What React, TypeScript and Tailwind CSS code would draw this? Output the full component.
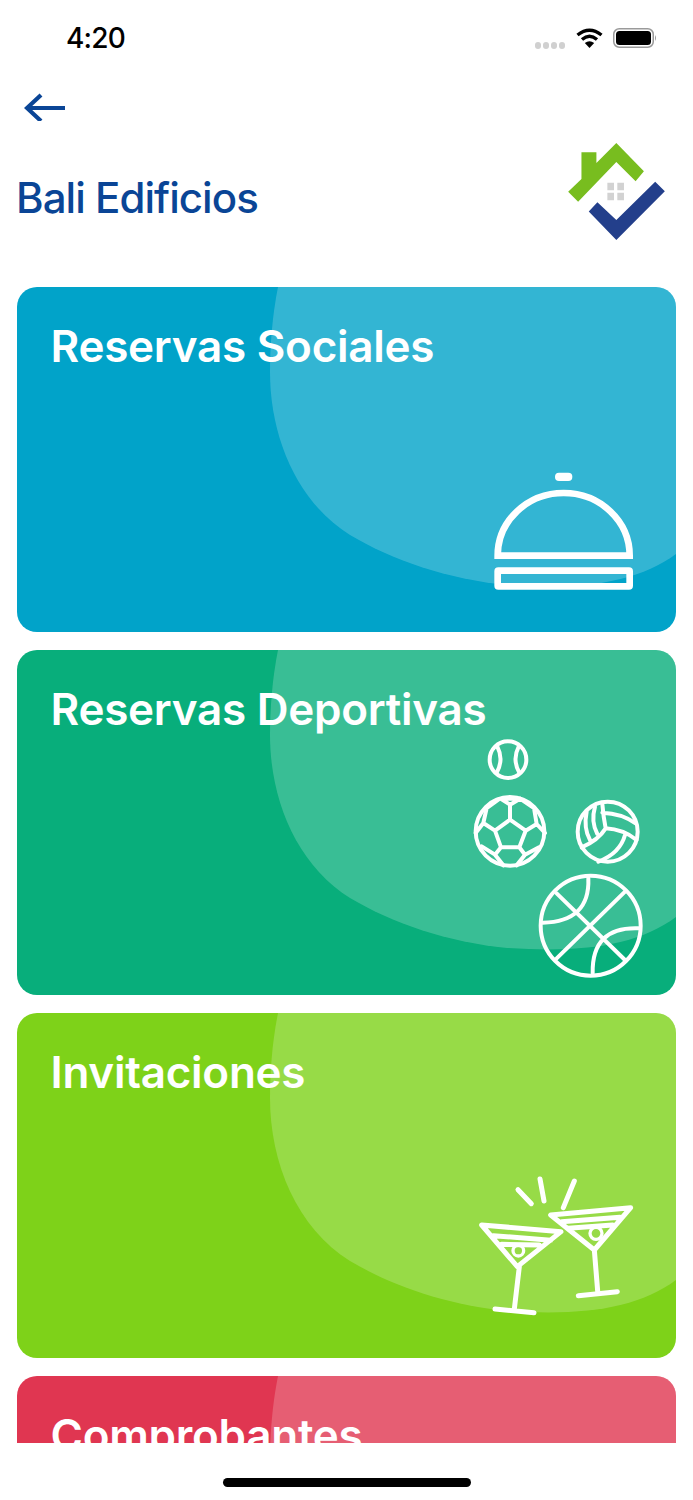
const cards = [
  { title: "Reservas Sociales", bg: "bg-[#01a3c9]", icon: <DomeIcon /> },
  { title: "Reservas Deportivas", bg: "bg-[#08ae7b]", icon: <SportsIcon /> },
  { title: "Invitaciones", bg: "bg-[#7ed219]", icon: <CocktailIcon /> },
  { title: "Comprobantes", bg: "bg-[#e03651]", icon: null },
];

function DomeIcon() {
  return (
    <svg className="absolute left-[433px] top-[163px] w-[230px] h-[190px]" viewBox="0 0 690 570" fill="none" stroke="white" strokeWidth="20">
      <path d="M143 317 H539 A198 188 0 0 0 143 317 Z" strokeLinejoin="miter" />
      <rect x="143" y="362" width="396" height="47" rx="2" />
      <rect x="315" y="68" width="52" height="25" rx="12" fill="white" stroke="none" />
    </svg>
  );
}

function SportsIcon() {
  return (
    <svg className="absolute left-[443px] top-[80px] w-[200px] h-[255px]" viewBox="0 0 600 765" fill="none" stroke="white" strokeWidth="12" strokeLinecap="round" strokeLinejoin="round">
      <circle cx="144" cy="89" r="55" />
      <path d="M112 50 Q132 89 110 128 M176 50 Q156 89 178 128" />
      <circle cx="150" cy="304" r="103" />
      <path d="M150 269 L197 302 L178 352 L123 352 L105 302 Z M150 269 L150 224 L125 208 M150 224 L180 206 M105 302 L70 279 L80 234 L115 209 M70 279 L47 309 M197 302 L230 282 L222 234 L180 206 M230 282 L255 309 M123 352 L105 374 L65 349 M105 374 L130 406 M178 352 L195 374 L237 352 M195 374 L170 406 M125 206 H175" />
      <circle cx="443" cy="305" r="90" />
      <path d="M427 222 Q430 260 437 295 M427 248 Q485 250 527 280 M437 295 Q490 298 530 330 M437 295 Q415 330 365 352 M380 245 Q370 295 390 330 M405 230 Q392 275 412 312 M495 315 Q480 370 415 395" />
      <circle cx="392" cy="587" r="150" />
      <path d="M290 490 L495 690 M495 485 L290 685 M385 445 Q390 575 248 578 M535 595 Q395 590 398 730" />
    </svg>
  );
}

function CocktailIcon() {
  return (
    <svg className="absolute left-[443px] top-[152px] w-[190px] h-[160px]" viewBox="0 0 570 480" fill="none" stroke="white" strokeWidth="15" strokeLinecap="round" strokeLinejoin="round">
      <path d="M65 180 L303 200 L172 305 Z M100 212 L272 226 M125 238 L238 240 M178 305 L163 432 M105 432 L222 443" />
      <circle cx="175" cy="257" r="16" strokeWidth="10" />
      <path d="M272 150 L512 128 L403 255 Z M305 170 L480 157 M325 190 L458 180 M403 255 L413 378 M355 392 L472 380" />
      <circle cx="408" cy="205" r="18" strokeWidth="10" />
      <path d="M174 74 L214 116 M240 42 L252 108 M343 48 L310 128" />
    </svg>
  );
}

function StatusBar() {
  return (
    <div className="h-[76px] flex items-start justify-between pl-[66px] pr-[36px] pt-[20px]">
      <span className="text-[28px] leading-[36px] font-medium tracking-[-0.8px] text-black">4:20</span>
      <div className="flex items-start mt-[8px]">
        <div className="flex gap-[2px] mt-[14px] mr-[11px]">
          <div className="w-[6px] h-[7px] rounded-full bg-[#d0d0d0]" />
          <div className="w-[6px] h-[7px] rounded-full bg-[#d0d0d0]" />
          <div className="w-[6px] h-[7px] rounded-full bg-[#d0d0d0]" />
          <div className="w-[6px] h-[7px] rounded-full bg-[#d0d0d0]" />
        </div>
        <svg className="w-[27px] h-[20px] mr-[10px]" viewBox="0 0 27 20" fill="none" stroke="black" strokeWidth="3.4">
          <path d="M1.5 7 Q13.5 -2.5 25.5 7" />
          <path d="M6 11.5 Q13.5 5 21 11.5" />
          <path d="M13.5 20 L8.8 15 Q13.5 11.5 18.2 15 Z" fill="black" stroke="none" />
        </svg>
        <svg className="w-[44px] h-[20px]" viewBox="0 0 44 20" fill="none">
          <rect x="0.75" y="0.75" width="39.5" height="18.5" rx="5.5" stroke="#9a9a9a" strokeWidth="1.5" />
          <rect x="3" y="3" width="35" height="14" rx="3.5" fill="black" />
          <path d="M42 7 Q44 10 42 13 Z" fill="#9a9a9a" />
        </svg>
      </div>
    </div>
  );
}

function Card({ title, bg, icon }: { title: string; bg: string; icon: React.ReactNode }) {
  return (
    <div className={`relative shrink-0 h-[345px] rounded-[20px] overflow-hidden ${bg}`}>
      <svg className="absolute inset-0 w-[659px] h-[345px]" viewBox="0 0 659 345">
        <path d="M261 0 C255 30 253 60 253 85 C253 150 280 215 333 248 C375 273 430 292 490 298 C570 303 620 295 659 267 V0 Z" fill="white" fillOpacity="0.2" />
      </svg>
      {icon}
      <h2 className="relative pl-[33.5px] pt-[32px] text-[44px] leading-[54px] font-semibold tracking-[-0.25px] text-white">{title}</h2>
    </div>
  );
}

export default function App() {
  return (
    <div className="w-[693px] h-[1500px] bg-white flex flex-col overflow-hidden font-['Inter',sans-serif]">
      <StatusBar />
      <div className="h-[44px] pl-[24px] pt-[17px]">
        <svg className="w-[42px] h-[28px]" viewBox="0 0 42 28" fill="none" stroke="#0a4596" strokeWidth="4.2">
          <path d="M41 15 H3 M17 2 L3 15 L17 28" />
        </svg>
      </div>
      <div className="h-[167px] flex items-start justify-between pl-[16px] pr-[28px] pt-[23px]">
        <h1 className="text-[42px] leading-[50px] font-medium tracking-[-0.95px] text-[#0a4596] mt-[30px]">Bali Edificios</h1>
        <svg className="w-[97px] h-[97px]" viewBox="55 40 291 292">
          <path d="M200 40 L283 125 L258 155 L200 97 L85 217 L55 187 L95 148 V68 H140 V100 Z" fill="#78bd1f" />
          <path d="M143 218 L200 272 L317 157 L346 185 L200 332 L117 246 Z" fill="#233f8b" />
          <path d="M173 160 H193 V182 H173 Z M203 160 H223 V182 H203 Z M173 190 H193 V212 H173 Z M203 190 H223 V212 H203 Z" fill="#d2d2d2" />
        </svg>
      </div>
      <div className="h-[1156px] overflow-hidden flex flex-col gap-[18px] px-[17px]">
        {cards.map((c) => (
          <Card key={c.title} title={c.title} bg={c.bg} icon={c.icon} />
        ))}
      </div>
      <div className="flex-1 flex justify-center pt-[35px]">
        <div className="w-[248px] h-[9px] rounded-full bg-black" />
      </div>
    </div>
  );
}
